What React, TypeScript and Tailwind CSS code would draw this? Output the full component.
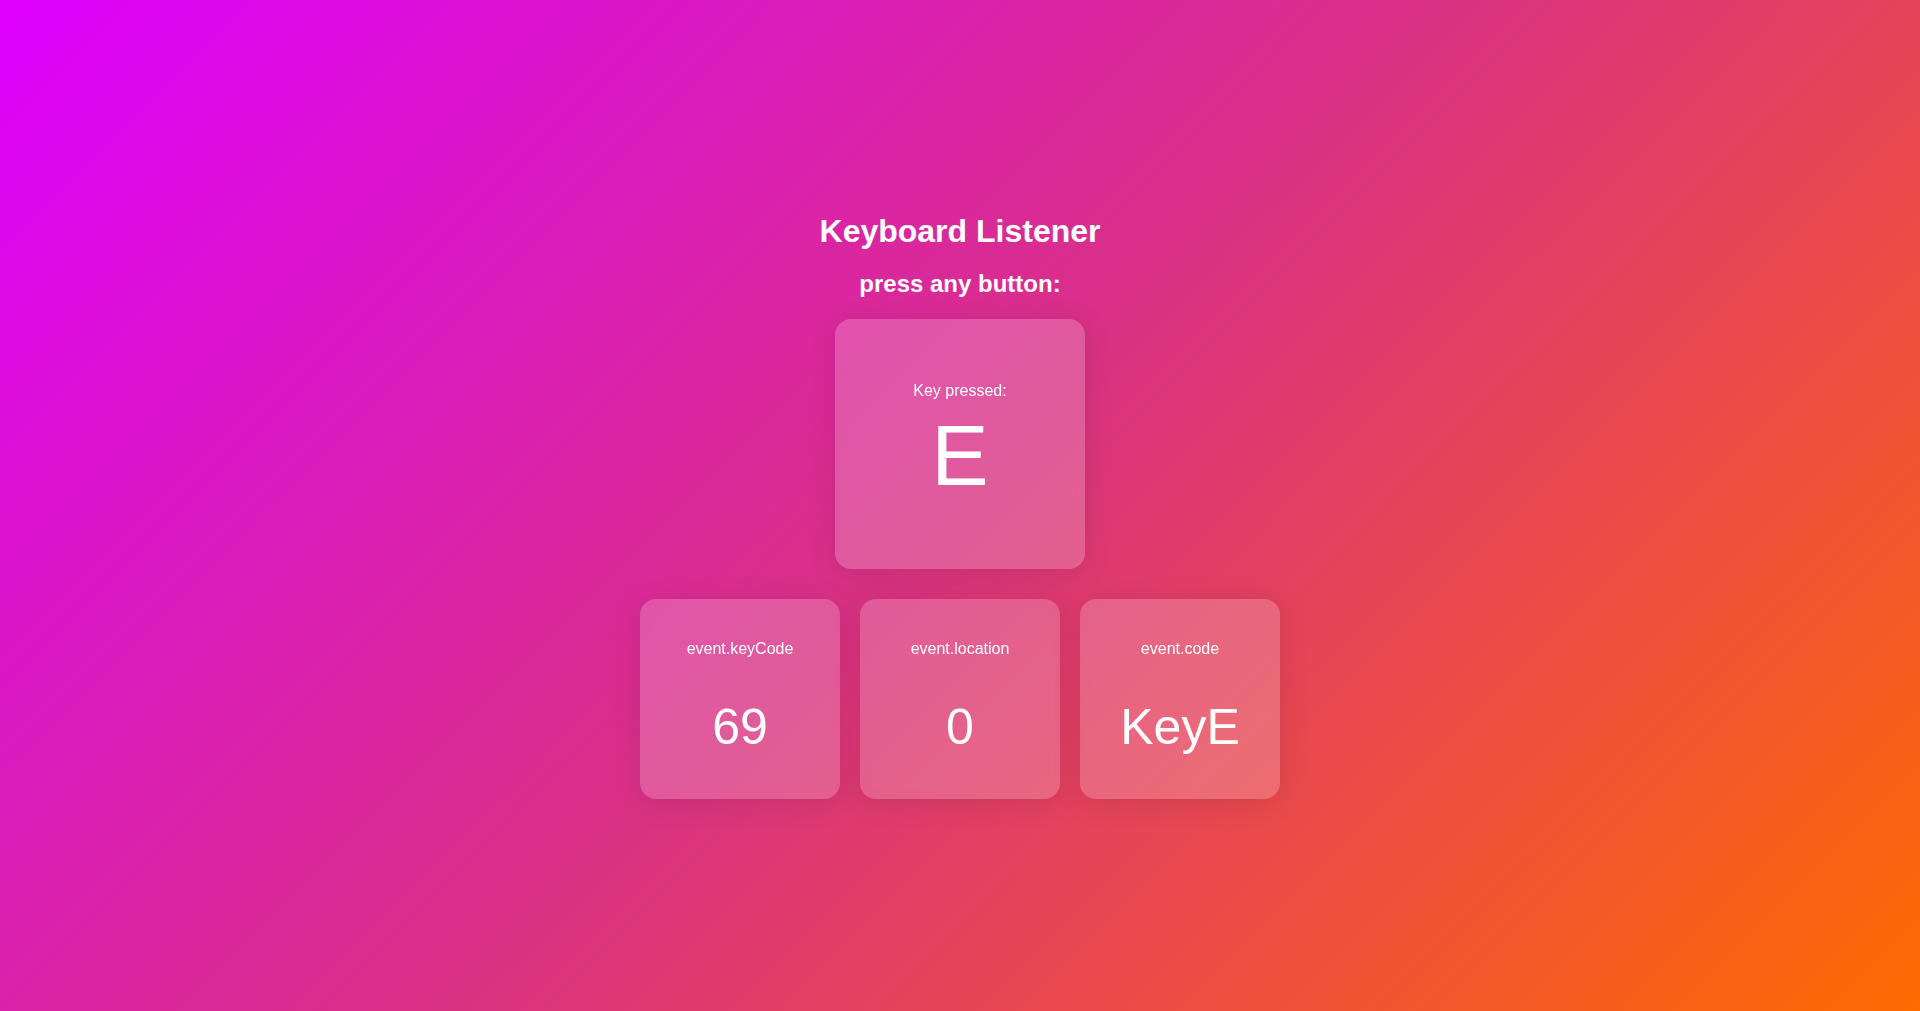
import React from "react";

function InfoCard({ label, value }: { label: string; value: string }) {
  return (
    <div className="w-[200px] h-[200px] rounded-2xl bg-white/20 shadow-[0_4px_30px_rgba(0,0,0,0.1)] backdrop-blur-[5px] flex flex-col items-center pt-[41px]">
      <div className="text-[16px] leading-[18px]">{label}</div>
      <div className="text-[50px] leading-[57px] mt-[41px]">{value}</div>
    </div>
  );
}

export default function App() {
  return (
    <div className="min-h-screen w-full bg-[linear-gradient(135deg,#dd00ff,#d93282,#ff6a00)] flex flex-col items-center pt-[213px] font-['Liberation_Sans',Arial,sans-serif] text-white">
      <h1 className="text-[32px] leading-[37px] font-bold mb-[20px]">Keyboard Listener</h1>
      <h2 className="text-[24px] leading-[28px] font-bold mb-[21px]">press any button:</h2>
      <div className="w-[250px] h-[250px] rounded-2xl bg-white/20 shadow-[0_4px_30px_rgba(0,0,0,0.1)] backdrop-blur-[5px] flex flex-col items-center justify-center gap-[6px] pb-[2px]">
        <div className="text-[16px] leading-[18px]">Key pressed:</div>
        <div className="text-[86px] leading-[98px]">E</div>
      </div>
      <div className="flex gap-[20px] mt-[30px]">
        <InfoCard label="event.keyCode" value="69" />
        <InfoCard label="event.location" value="0" />
        <InfoCard label="event.code" value="KeyE" />
      </div>
    </div>
  );
}
